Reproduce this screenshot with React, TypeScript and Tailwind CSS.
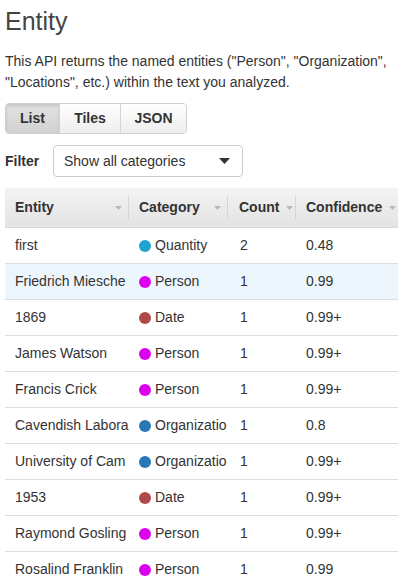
import React from "react";

const rows: [string, string, string, string, string][] = [
  ["first", "Quantity", "#1ea4cf", "2", "0.48"],
  ["Friedrich Miesche", "Person", "#dd00ee", "1", "0.99"],
  ["1869", "Date", "#b04a4a", "1", "0.99+"],
  ["James Watson", "Person", "#dd00ee", "1", "0.99+"],
  ["Francis Crick", "Person", "#dd00ee", "1", "0.99+"],
  ["Cavendish Labora", "Organizatio", "#2878b8", "1", "0.8"],
  ["University of Cam", "Organizatio", "#2878b8", "1", "0.99+"],
  ["1953", "Date", "#b04a4a", "1", "0.99+"],
  ["Raymond Gosling", "Person", "#dd00ee", "1", "0.99+"],
  ["Rosalind Franklin", "Person", "#dd00ee", "1", "0.99"],
];

function SortArrow() {
  return (
    <svg width="7" height="4" viewBox="0 0 7 4" className="shrink-0">
      <path d="M0 0 L7 0 L3.5 4 Z" fill="#b8b8b8" />
    </svg>
  );
}

export default function App() {
  return (
    <div
      className="w-[416px] h-[587px] overflow-hidden bg-white text-[#333]"
      style={{ fontFamily: '"Liberation Sans", Arial, sans-serif' }}
    >
      <div className="pl-[5px] pt-[6px]">
        <h1 className="text-[25px] leading-[30px] text-[#444] font-normal">Entity</h1>
        <p className="mt-[15px] text-[14px] leading-[21px] text-[#333] w-[400px]">
          This API returns the named entities ("Person", "Organization", "Locations", etc.) within the text you analyzed.
        </p>
        <div className="mt-[10px] flex w-[182px] h-[31px] rounded-[4px] border border-[#cfcfcf] overflow-hidden text-[14px] font-bold text-[#333]">
          <div className="w-[53px] flex items-center justify-center bg-gradient-to-b from-[#e2e2e2] to-[#d2d2d2] shadow-[inset_0_2px_3px_rgba(0,0,0,0.12)]">
            List
          </div>
          <div className="w-[61px] flex items-center justify-center border-l border-[#d4d4d4] bg-gradient-to-b from-[#ffffff] to-[#eeeeee]">
            Tiles
          </div>
          <div className="flex-1 flex items-center justify-center border-l border-[#d4d4d4] bg-gradient-to-b from-[#ffffff] to-[#eeeeee]">
            JSON
          </div>
        </div>
        <div className="mt-[11px] flex items-center h-[32px]">
          <span className="text-[14px] font-bold text-[#333] w-[48px]">Filter</span>
          <div className="w-[190px] h-[32px] rounded-[4px] border border-[#cccccc] flex items-center justify-between pl-[10px] pr-[12px] text-[14px] text-[#333]">
            <span>Show all categories</span>
            <svg width="11" height="6" viewBox="0 0 11 6">
              <path d="M0 0 L11 0 L5.5 6 Z" fill="#333" />
            </svg>
          </div>
        </div>
        <div className="mt-[11px] w-[393px] text-[14px]">
          <div className="flex h-[40px] items-center bg-gradient-to-b from-[#f3f3f3] to-[#e3e3e3] border-b border-[#d8d8d8] font-bold text-[#333]">
            <div className="w-[124px] flex items-center justify-between pl-[10px] pr-[6px] border-r border-[#d6d6d6] h-[24px]">
              <span>Entity</span>
              <SortArrow />
            </div>
            <div className="w-[99px] flex items-center justify-between pl-[10px] pr-[6px] border-r border-[#d6d6d6] h-[24px]">
              <span>Category</span>
              <SortArrow />
            </div>
            <div className="w-[68px] flex items-center justify-between pl-[11px] pr-[2px] border-r border-[#d6d6d6] h-[24px]">
              <span>Count</span>
              <SortArrow />
            </div>
            <div className="flex-1 flex items-center justify-between pl-[10px] pr-[2px] h-[24px]">
              <span>Confidence</span>
              <SortArrow />
            </div>
          </div>
          {rows.map(([e, c, col, n, conf], i) => (
            <div
              key={i}
              className={
                "flex h-[36px] items-center border-b border-[#dddddd] text-[#333] " +
                (i === 1 ? "bg-[#eef6fd]" : "bg-white")
              }
            >
              <div className="w-[124px] pl-[10px] overflow-hidden whitespace-nowrap">{e}</div>
              <div className="w-[99px] pl-[10px] overflow-hidden whitespace-nowrap flex items-center">
                <span className="inline-block w-[12px] h-[12px] rounded-full shrink-0 mr-[4px]" style={{ backgroundColor: col }} />
                <span>{c}</span>
              </div>
              <div className="w-[68px] pl-[12px]">{n}</div>
              <div className="flex-1 pl-[10px]">{conf}</div>
            </div>
          ))}
        </div>
      </div>
    </div>
  );
}
